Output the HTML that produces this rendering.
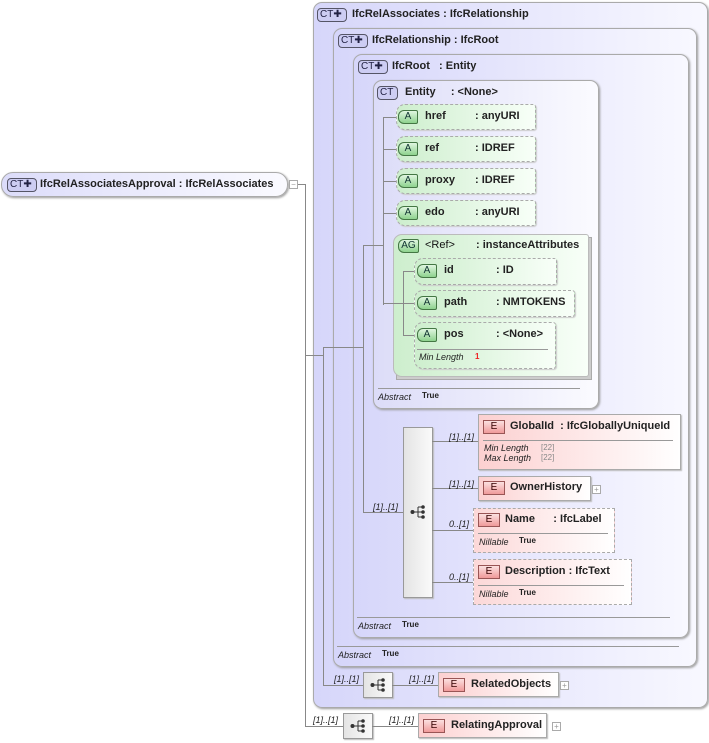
<!DOCTYPE html>
<html><head><style>
*{margin:0;padding:0;box-sizing:border-box}
body{width:709px;height:743px;background:#fff;font-family:"Liberation Sans",sans-serif;font-size:11px;color:#222;position:relative;overflow:hidden}
.a{position:absolute}
.ct{border:1px solid #aaa;border-radius:9px;background:linear-gradient(90deg,#d6d6fa,#f8f8ff);box-shadow:1px 1px 2px #999}
.cti{position:absolute;left:0;top:0;width:30px;height:14px;border:1px solid #556;border-radius:4px;background:#cdcdf3;font-size:10px;line-height:12px;padding-left:2px;color:#224}
.t{position:absolute;font-weight:bold;font-size:11px;white-space:nowrap}
.attr{border:1px dashed #aaa;border-radius:9px 3px 3px 9px;background:linear-gradient(90deg,#cdeecd,#f8fff8);box-shadow:1px 1px 1px #ccc}
.ai{position:absolute;width:20px;height:14px;border:1px solid #474;border-radius:6px 2px 2px 6px;background:linear-gradient(#e0f6e0,#8ed28e);font-size:10px;line-height:12px;text-align:center;color:#133}
.el{background:linear-gradient(90deg,#fcd0d0,#fff);border:1px solid #aaa;box-shadow:1px 1px 1px #bbb}
.eld{background:linear-gradient(90deg,#fcd8d8,#fff);border:1px dashed #aaa}
.ei{position:absolute;width:22px;height:14px;border:1px solid #955;background:linear-gradient(#fbe0e0,#f09a9a);font-size:10px;line-height:12px;text-align:center;color:#300}
.ln{position:absolute;background:#888}
.i{font-style:italic;font-size:9px;position:absolute;white-space:nowrap}
.sq{background:linear-gradient(90deg,#e4e4e4,#fafafa);border:1px solid #999;box-shadow:1px 1px 1px #bbb}
.pl{position:absolute;width:9px;height:9px;border:1px solid #aaa;font-size:8px;line-height:7px;text-align:center;color:#999;background:#fff}
.hr{position:absolute;height:1px;background:#999}
svg.s{position:absolute;width:16px;height:14px}
</style></head><body>
<svg width="0" height="0" style="position:absolute"><defs><g id="seq"><circle cx="2.5" cy="7" r="2" fill="#333"/><line x1="2" y1="7" x2="8" y2="7" stroke="#333"/><line x1="8" y1="2" x2="8" y2="12" stroke="#333"/><line x1="8" y1="2" x2="13" y2="2" stroke="#333"/><line x1="8" y1="12" x2="13" y2="12" stroke="#333"/><line x1="8" y1="7" x2="13" y2="7" stroke="#333"/><circle cx="13" cy="2" r="1.8" fill="#333"/><circle cx="13" cy="7" r="1.8" fill="#333"/><circle cx="13" cy="12" r="1.8" fill="#333"/></g></defs></svg>

<!-- root element -->
<div class="a ct" style="left:1px;top:172px;width:287px;height:25px;border-radius:12px;background:linear-gradient(90deg,#dcdcfa,#fafaff)"></div>
<div class="cti" style="left:7px;top:178px">CT✚</div>
<div class="t" style="left:40px;top:178px">IfcRelAssociatesApproval : IfcRelAssociates</div>
<div class="pl" style="left:289px;top:180px">−</div>
<div class="ln" style="left:298px;top:184px;width:8px;height:1px"></div>
<div class="ln" style="left:305px;top:184px;width:1px;height:542px"></div>

<div class="a ct" style="left:313px;top:2px;width:395px;height:706px"></div>
<div class="cti" style="left:317px;top:8px">CT✚</div>
<div class="t" style="left:352px;top:8px">IfcRelAssociates : IfcRelationship</div>

<div class="a ct" style="left:333px;top:28px;width:364px;height:639px"></div>
<div class="cti" style="left:338px;top:34px">CT✚</div>
<div class="t" style="left:372px;top:34px">IfcRelationship : IfcRoot</div>

<div class="a ct" style="left:353px;top:54px;width:336px;height:584px"></div>
<div class="cti" style="left:358px;top:60px">CT✚</div>
<div class="t" style="left:392px;top:60px">IfcRoot &nbsp;&nbsp;: Entity</div>

<div class="a ct" style="left:373px;top:80px;width:226px;height:329px;background:linear-gradient(90deg,#dcdcf8,#fbfbff)"></div>
<div class="cti" style="left:377px;top:86px;width:21px">CT</div>
<div class="t" style="left:405px;top:86px">Entity &nbsp;&nbsp;&nbsp;&nbsp;: &lt;None&gt;</div>

<div class="ln" style="left:383px;top:117px;width:1px;height:188px"></div>
<div class="ln" style="left:383px;top:117px;width:13px;height:1px"></div>
<div class="ln" style="left:383px;top:149px;width:13px;height:1px"></div>
<div class="ln" style="left:383px;top:181px;width:13px;height:1px"></div>
<div class="ln" style="left:383px;top:213px;width:13px;height:1px"></div>
<div class="ln" style="left:363px;top:245px;width:20px;height:1px"></div>

<div class="a attr" style="left:396px;top:104px;width:140px;height:26px"></div>
<div class="ai" style="left:398px;top:110px">A</div><div class="t" style="left:425px;top:110px">href</div><div class="t" style="left:475px;top:110px">: anyURI</div>
<div class="a attr" style="left:396px;top:136px;width:140px;height:26px"></div>
<div class="ai" style="left:398px;top:142px">A</div><div class="t" style="left:425px;top:142px">ref</div><div class="t" style="left:475px;top:142px">: IDREF</div>
<div class="a attr" style="left:396px;top:168px;width:140px;height:26px"></div>
<div class="ai" style="left:398px;top:174px">A</div><div class="t" style="left:425px;top:174px">proxy</div><div class="t" style="left:475px;top:174px">: IDREF</div>
<div class="a attr" style="left:396px;top:200px;width:140px;height:26px"></div>
<div class="ai" style="left:398px;top:206px">A</div><div class="t" style="left:425px;top:206px">edo</div><div class="t" style="left:475px;top:206px">: anyURI</div>

<div class="a" style="left:396px;top:237px;width:196px;height:143px;background:#ccc;border:1px solid #aaa"></div>
<div class="a" style="left:393px;top:234px;width:196px;height:143px;border:1px solid #bbb;border-radius:9px 3px 3px 9px;background:linear-gradient(90deg,#cdeecd,#f8fff8)"></div>
<div class="ai" style="left:398px;top:239px;width:21px">AG</div>
<div class="t" style="left:425px;top:239px;font-weight:normal;color:#111">&lt;Ref&gt;</div>
<div class="t" style="left:476px;top:239px">: instanceAttributes</div>
<div class="ln" style="left:403px;top:271px;width:1px;height:64px"></div>
<div class="ln" style="left:403px;top:271px;width:11px;height:1px"></div>
<div class="ln" style="left:383px;top:303px;width:31px;height:1px"></div>
<div class="ln" style="left:403px;top:335px;width:11px;height:1px"></div>
<div class="a attr" style="left:414px;top:258px;width:143px;height:27px"></div>
<div class="ai" style="left:417px;top:264px">A</div><div class="t" style="left:444px;top:264px">id</div><div class="t" style="left:496px;top:264px">: ID</div>
<div class="a attr" style="left:414px;top:290px;width:161px;height:27px"></div>
<div class="ai" style="left:417px;top:296px">A</div><div class="t" style="left:444px;top:296px">path</div><div class="t" style="left:496px;top:296px">: NMTOKENS</div>
<div class="a attr" style="left:414px;top:322px;width:142px;height:47px"></div>
<div class="ai" style="left:417px;top:328px">A</div><div class="t" style="left:444px;top:328px">pos</div><div class="t" style="left:496px;top:328px">: &lt;None&gt;</div>
<div class="hr" style="left:417px;top:349px;width:131px"></div>
<div class="i" style="left:419px;top:352px">Min Length</div><div class="t" style="left:475px;top:352px;color:#e22;font-size:8px">1</div>

<div class="hr" style="left:378px;top:388px;width:202px"></div>
<div class="i" style="left:378px;top:392px">Abstract</div><div class="t" style="left:422px;top:391px;font-size:8px">True</div>

<div class="ln" style="left:363px;top:245px;width:1px;height:267px"></div>
<div class="ln" style="left:363px;top:512px;width:40px;height:1px"></div>
<div class="i" style="left:373px;top:502px">[1]..[1]</div>
<div class="a sq" style="left:403px;top:427px;width:30px;height:171px"></div>
<svg class="s" style="left:410px;top:505px"><use href="#seq"/></svg>
<div class="ln" style="left:432px;top:441px;width:46px;height:1px"></div>
<div class="ln" style="left:432px;top:488px;width:46px;height:1px"></div>
<div class="ln" style="left:432px;top:530px;width:41px;height:1px"></div>
<div class="ln" style="left:432px;top:582px;width:41px;height:1px"></div>
<div class="i" style="left:449px;top:432px">[1]..[1]</div>
<div class="i" style="left:449px;top:479px">[1]..[1]</div>
<div class="i" style="left:449px;top:519px">0..[1]</div>
<div class="i" style="left:449px;top:572px">0..[1]</div>

<div class="a el" style="left:478px;top:414px;width:203px;height:56px"></div>
<div class="ei" style="left:483px;top:420px">E</div><div class="t" style="left:510px;top:420px">GlobalId &nbsp;: IfcGloballyUniqueId</div>
<div class="hr" style="left:483px;top:440px;width:190px"></div>
<div class="i" style="left:484px;top:443px">Min Length</div><div class="i" style="left:541px;top:443px;font-style:normal;color:#888;font-size:8px">[22]</div>
<div class="i" style="left:484px;top:453px">Max Length</div><div class="i" style="left:541px;top:453px;font-style:normal;color:#888;font-size:8px">[22]</div>

<div class="a el" style="left:478px;top:476px;width:113px;height:25px"></div>
<div class="ei" style="left:483px;top:481px">E</div><div class="t" style="left:510px;top:481px">OwnerHistory</div>
<div class="pl" style="left:592px;top:485px">+</div>

<div class="a eld" style="left:473px;top:508px;width:142px;height:45px"></div>
<div class="ei" style="left:478px;top:513px">E</div><div class="t" style="left:505px;top:513px">Name &nbsp;&nbsp;&nbsp;&nbsp;&nbsp;: IfcLabel</div>
<div class="hr" style="left:478px;top:533px;width:130px"></div>
<div class="i" style="left:479px;top:537px">Nillable</div><div class="t" style="left:519px;top:536px;font-size:8px">True</div>

<div class="a eld" style="left:473px;top:559px;width:159px;height:46px"></div>
<div class="ei" style="left:478px;top:565px">E</div><div class="t" style="left:505px;top:565px">Description : IfcText</div>
<div class="hr" style="left:478px;top:585px;width:146px"></div>
<div class="i" style="left:479px;top:589px">Nillable</div><div class="t" style="left:519px;top:588px;font-size:8px">True</div>

<div class="hr" style="left:357px;top:617px;width:313px"></div>
<div class="i" style="left:358px;top:621px">Abstract</div><div class="t" style="left:402px;top:620px;font-size:8px">True</div>
<div class="hr" style="left:337px;top:646px;width:342px"></div>
<div class="i" style="left:338px;top:650px">Abstract</div><div class="t" style="left:382px;top:649px;font-size:8px">True</div>

<div class="ln" style="left:323px;top:347px;width:1px;height:338px"></div>
<div class="ln" style="left:305px;top:355px;width:18px;height:1px"></div>
<div class="ln" style="left:323px;top:347px;width:40px;height:1px"></div>
<div class="ln" style="left:323px;top:685px;width:40px;height:1px"></div>
<div class="i" style="left:334px;top:674px">[1]..[1]</div>
<div class="a sq" style="left:363px;top:672px;width:30px;height:26px"></div>
<svg class="s" style="left:370px;top:678px"><use href="#seq"/></svg>
<div class="ln" style="left:392px;top:685px;width:46px;height:1px"></div>
<div class="i" style="left:409px;top:674px">[1]..[1]</div>
<div class="a el" style="left:438px;top:672px;width:121px;height:25px"></div>
<div class="ei" style="left:443px;top:678px">E</div><div class="t" style="left:471px;top:678px">RelatedObjects</div>
<div class="pl" style="left:560px;top:681px">+</div>

<div class="ln" style="left:305px;top:726px;width:38px;height:1px"></div>
<div class="i" style="left:313px;top:715px">[1]..[1]</div>
<div class="a sq" style="left:343px;top:713px;width:30px;height:26px"></div>
<svg class="s" style="left:350px;top:719px"><use href="#seq"/></svg>
<div class="ln" style="left:372px;top:726px;width:46px;height:1px"></div>
<div class="i" style="left:389px;top:715px">[1]..[1]</div>
<div class="a el" style="left:418px;top:713px;width:129px;height:25px"></div>
<div class="ei" style="left:423px;top:719px">E</div><div class="t" style="left:451px;top:719px">RelatingApproval</div>
<div class="pl" style="left:552px;top:722px">+</div>
</body></html>
